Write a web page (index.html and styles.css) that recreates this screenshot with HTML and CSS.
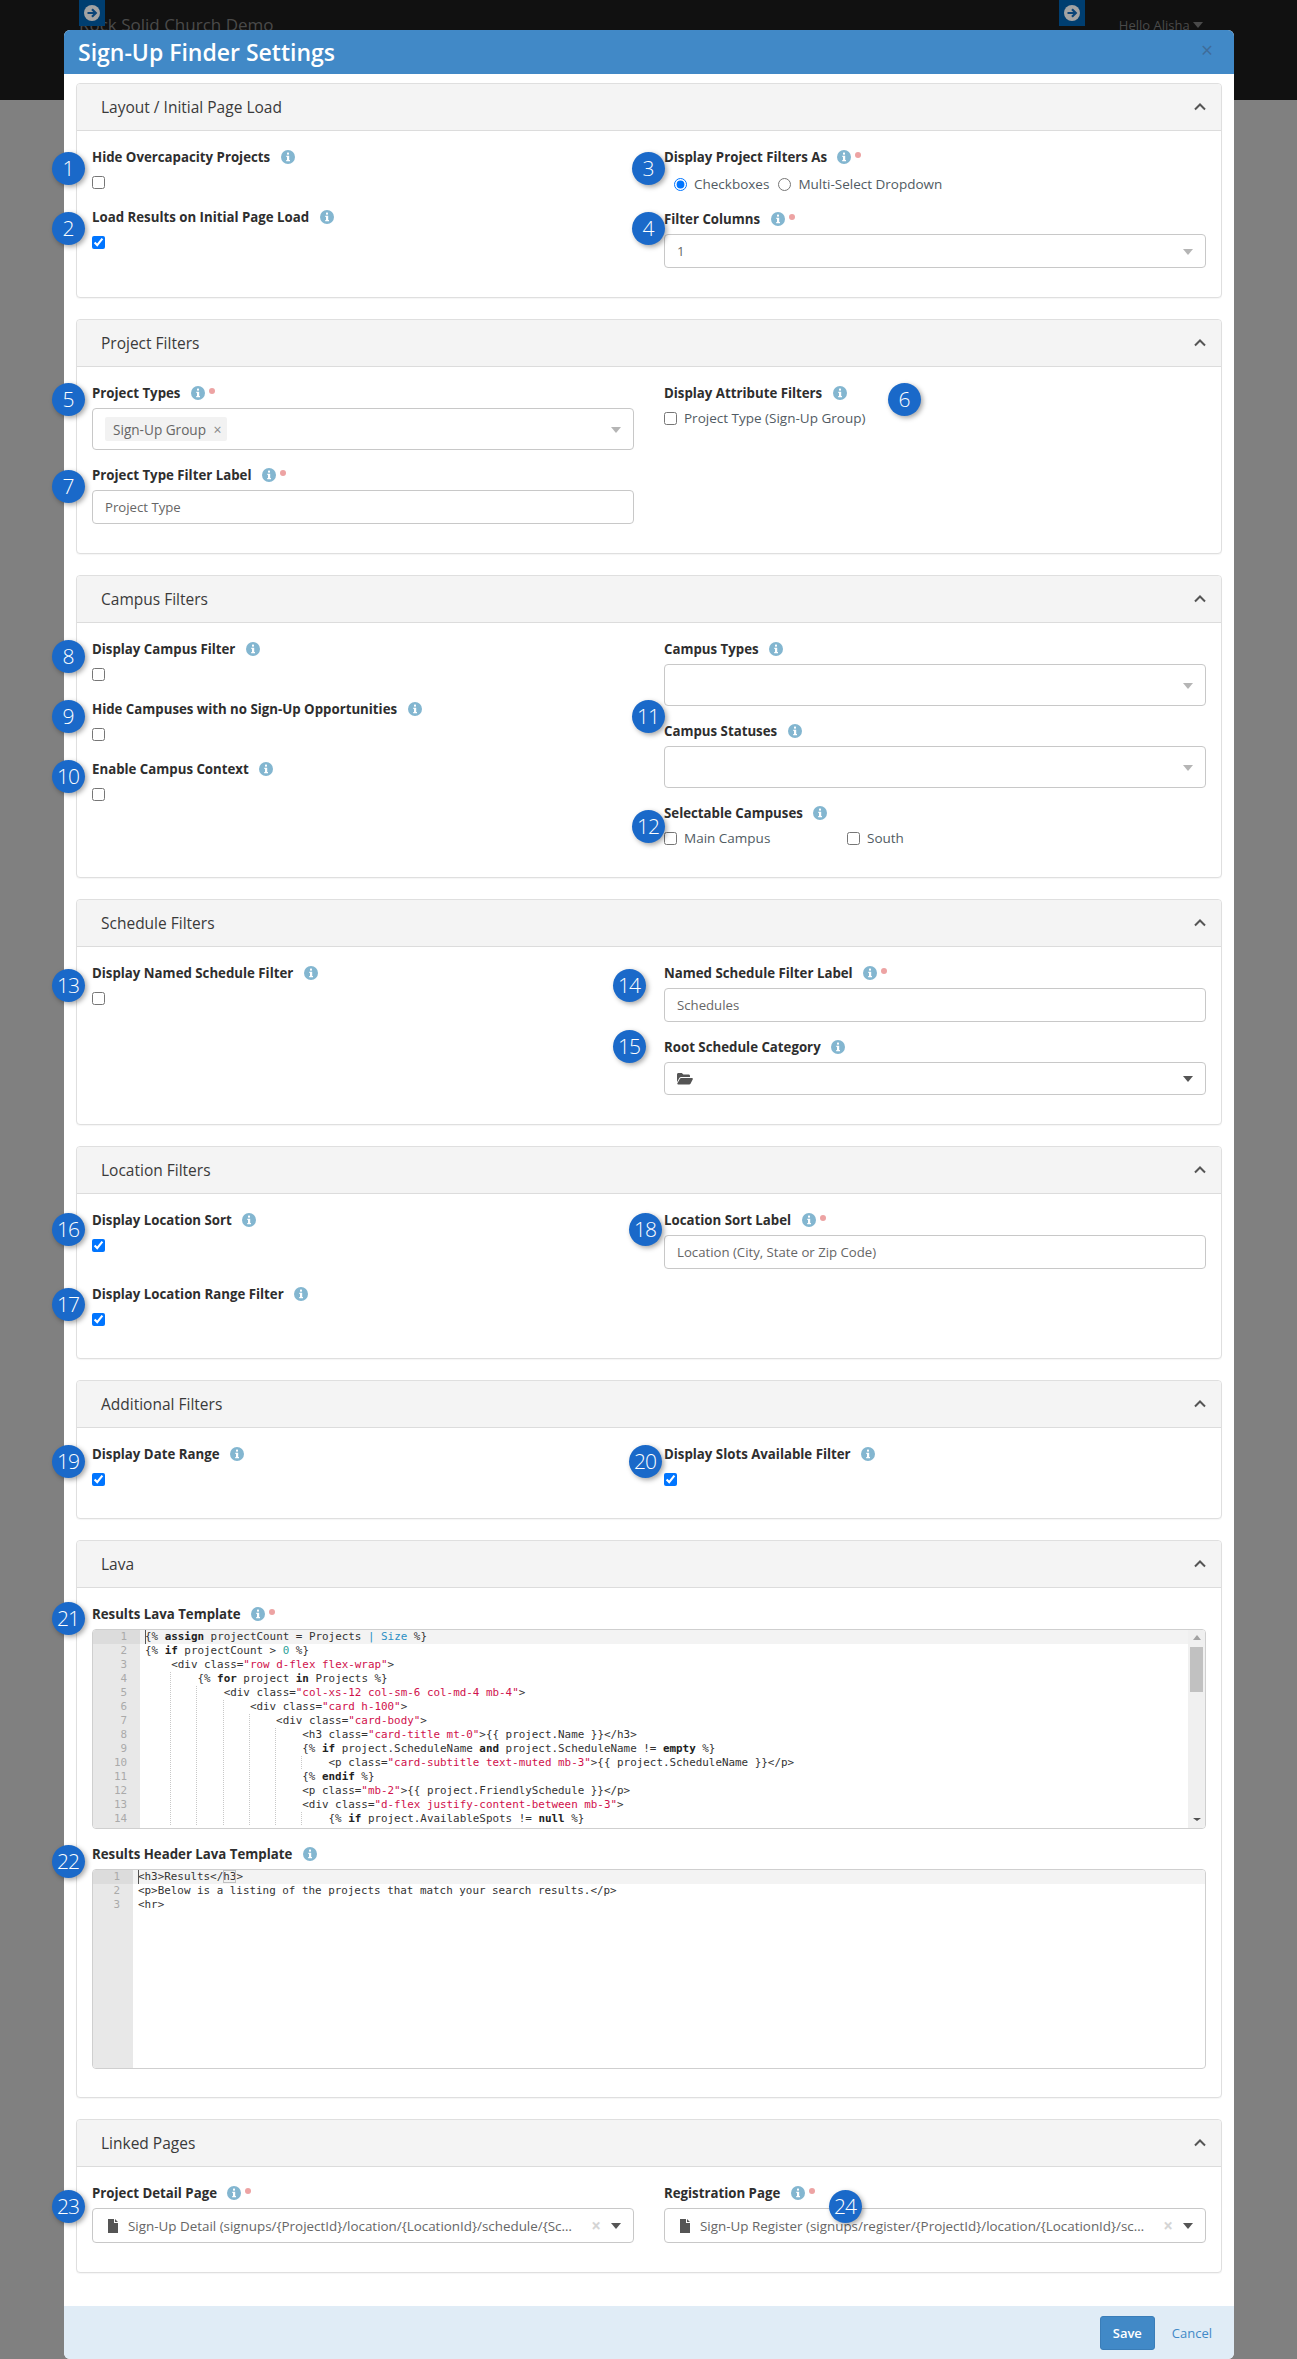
FILE: index.html
```html
<!DOCTYPE html>
<html lang="en">
<head>
<meta charset="utf-8">
<title>Sign-Up Finder Settings</title>
<link rel="stylesheet" href="styles.css">
</head>
<body>
<svg class="defs" width="0" height="0" aria-hidden="true">
  <symbol id="i-info" viewBox="0 0 14 14">
    <circle cx="7" cy="7" r="7" fill="#83b6d0"/>
    <rect x="6" y="2.6" width="2" height="2" fill="#fff"/>
    <path d="M5.3 5.8h2.9v4.2h.8v1.2H5.2V10H6V7H5.3z" fill="#fff"/>
  </symbol>
  <symbol id="i-up" viewBox="0 0 14 10">
    <path d="M2 7.5 7 2.5l5 5" fill="none" stroke="#555" stroke-width="2"/>
  </symbol>
  <symbol id="i-file" viewBox="0 0 10 14">
    <path d="M0 0h6v4h4v10H0zM7 0l3 3H7z" fill="#555"/>
  </symbol>
  <symbol id="i-folder" viewBox="0 0 16 12">
    <path d="M0 1.5C0 .7.6 0 1.4 0h3.4l1.6 1.6h5.2c.8 0 1.4.6 1.4 1.4v1H4.2c-.8 0-1.5.4-1.9 1.1L0 9.2zM4.2 5H15c.7 0 1.1.7.8 1.3l-2.3 4.5c-.3.5-.7.8-1.3.8H1.2c-.7 0-1.1-.7-.8-1.3l2.5-4.5C3.100 5.300 3.600 5 4.200 5z" fill="#555"/>
  </symbol>
  <symbol id="i-go" viewBox="0 0 16 16">
    <circle cx="8" cy="8" r="8" fill="#a3a3a3"/>
    <path d="M3.500 8h8M8 4.200 11.800 8 8 11.800" fill="none" stroke="#0b4478" stroke-width="2.200"/>
  </symbol>
</svg>

<div class="topbar">
  <span class="brand">Rock Solid Church Demo</span>
  <span class="hello">Hello Alisha <i class="hello-caret"></i></span>
  <span class="go go-left"><svg class="go-icon"><use href="#i-go"/></svg></span>
  <span class="go go-right"><svg class="go-icon"><use href="#i-go"/></svg></span>
</div>

<div class="modal">
  <div class="modal-head">
    <h2 class="modal-title">Sign-Up Finder Settings</h2>
    <span class="modal-close">×</span>
  </div>
  <div class="modal-body">

    <section class="panel">
      <header class="panel-head"><h3 class="panel-title">Layout / Initial Page Load</h3><svg class="chev"><use href="#i-up"/></svg></header>
      <div class="panel-body">
        <div class="col">
          <div class="field">
            <div class="lbl">Hide Overcapacity Projects <svg class="info"><use href="#i-info"/></svg></div>
            <div class="check-row"><input type="checkbox"></div>
          </div>
          <div class="field">
            <div class="lbl">Load Results on Initial Page Load <svg class="info"><use href="#i-info"/></svg></div>
            <div class="check-row"><input type="checkbox" checked></div>
          </div>
        </div>
        <div class="col">
          <div class="field">
            <div class="lbl">Display Project Filters As <svg class="info"><use href="#i-info"/></svg><i class="req"></i></div>
            <div class="radio-row">
              <label class="opt"><input type="radio" name="display" checked>Checkboxes</label>
              <label class="opt"><input type="radio" name="display">Multi-Select Dropdown</label>
            </div>
          </div>
          <div class="field">
            <div class="lbl">Filter Columns <svg class="info"><use href="#i-info"/></svg><i class="req"></i></div>
            <div class="select select-single"><span class="value">1</span><i class="caret"></i></div>
          </div>
        </div>
      </div>
    </section>

    <section class="panel">
      <header class="panel-head"><h3 class="panel-title">Project Filters</h3><svg class="chev"><use href="#i-up"/></svg></header>
      <div class="panel-body">
        <div class="col">
          <div class="field">
            <div class="lbl">Project Types <svg class="info"><use href="#i-info"/></svg><i class="req"></i></div>
            <div class="select select-tall"><span class="chip">Sign-Up Group <b class="chip-x">×</b></span><i class="caret"></i></div>
          </div>
          <div class="field">
            <div class="lbl">Project Type Filter Label <svg class="info"><use href="#i-info"/></svg><i class="req"></i></div>
            <div class="input">Project Type</div>
          </div>
        </div>
        <div class="col">
          <div class="field">
            <div class="lbl">Display Attribute Filters <svg class="info"><use href="#i-info"/></svg></div>
            <div class="check-row"><label class="opt"><input type="checkbox">Project Type (Sign-Up Group)</label></div>
          </div>
        </div>
      </div>
    </section>

    <section class="panel">
      <header class="panel-head"><h3 class="panel-title">Campus Filters</h3><svg class="chev"><use href="#i-up"/></svg></header>
      <div class="panel-body">
        <div class="col">
          <div class="field">
            <div class="lbl">Display Campus Filter <svg class="info"><use href="#i-info"/></svg></div>
            <div class="check-row"><input type="checkbox"></div>
          </div>
          <div class="field">
            <div class="lbl">Hide Campuses with no Sign-Up Opportunities <svg class="info"><use href="#i-info"/></svg></div>
            <div class="check-row"><input type="checkbox"></div>
          </div>
          <div class="field">
            <div class="lbl">Enable Campus Context <svg class="info"><use href="#i-info"/></svg></div>
            <div class="check-row"><input type="checkbox"></div>
          </div>
        </div>
        <div class="col">
          <div class="field">
            <div class="lbl">Campus Types <svg class="info"><use href="#i-info"/></svg></div>
            <div class="select select-tall select-end"><i class="caret"></i></div>
          </div>
          <div class="field">
            <div class="lbl">Campus Statuses <svg class="info"><use href="#i-info"/></svg></div>
            <div class="select select-tall select-end"><i class="caret"></i></div>
          </div>
          <div class="field">
            <div class="lbl">Selectable Campuses <svg class="info"><use href="#i-info"/></svg></div>
            <div class="campus-list">
              <label class="opt"><input type="checkbox">Main Campus</label>
              <label class="opt"><input type="checkbox">South</label>
            </div>
          </div>
        </div>
      </div>
    </section>

    <section class="panel">
      <header class="panel-head"><h3 class="panel-title">Schedule Filters</h3><svg class="chev"><use href="#i-up"/></svg></header>
      <div class="panel-body">
        <div class="col">
          <div class="field">
            <div class="lbl">Display Named Schedule Filter <svg class="info"><use href="#i-info"/></svg></div>
            <div class="check-row"><input type="checkbox"></div>
          </div>
        </div>
        <div class="col">
          <div class="field">
            <div class="lbl">Named Schedule Filter Label <svg class="info"><use href="#i-info"/></svg><i class="req"></i></div>
            <div class="input">Schedules</div>
          </div>
          <div class="field">
            <div class="lbl">Root Schedule Category <svg class="info"><use href="#i-info"/></svg></div>
            <div class="select select-picker"><svg class="folder"><use href="#i-folder"/></svg><i class="caret caret-dark"></i></div>
          </div>
        </div>
      </div>
    </section>

    <section class="panel">
      <header class="panel-head"><h3 class="panel-title">Location Filters</h3><svg class="chev"><use href="#i-up"/></svg></header>
      <div class="panel-body">
        <div class="col">
          <div class="field field-loose">
            <div class="lbl">Display Location Sort <svg class="info"><use href="#i-info"/></svg></div>
            <div class="check-row"><input type="checkbox" checked></div>
          </div>
          <div class="field">
            <div class="lbl">Display Location Range Filter <svg class="info"><use href="#i-info"/></svg></div>
            <div class="check-row"><input type="checkbox" checked></div>
          </div>
        </div>
        <div class="col">
          <div class="field">
            <div class="lbl">Location Sort Label <svg class="info"><use href="#i-info"/></svg><i class="req"></i></div>
            <div class="input">Location (City, State or Zip Code)</div>
          </div>
        </div>
      </div>
    </section>

    <section class="panel">
      <header class="panel-head"><h3 class="panel-title">Additional Filters</h3><svg class="chev"><use href="#i-up"/></svg></header>
      <div class="panel-body">
        <div class="col">
          <div class="field">
            <div class="lbl">Display Date Range <svg class="info"><use href="#i-info"/></svg></div>
            <div class="check-row"><input type="checkbox" checked></div>
          </div>
        </div>
        <div class="col">
          <div class="field">
            <div class="lbl">Display Slots Available Filter <svg class="info"><use href="#i-info"/></svg></div>
            <div class="check-row"><input type="checkbox" checked></div>
          </div>
        </div>
      </div>
    </section>

    <section class="panel">
      <header class="panel-head"><h3 class="panel-title">Lava</h3><svg class="chev"><use href="#i-up"/></svg></header>
      <div class="panel-body panel-body-single">
        <div class="field">
          <div class="lbl">Results Lava Template <svg class="info"><use href="#i-info"/></svg><i class="req"></i></div>
          <div class="editor">
            <div class="gutter"><span class="gl gl-active">1</span><span class="gl">2</span><span class="gl">3</span><span class="gl">4</span><span class="gl">5</span><span class="gl">6</span><span class="gl">7</span><span class="gl">8</span><span class="gl">9</span><span class="gl">10</span><span class="gl">11</span><span class="gl">12</span><span class="gl">13</span><span class="gl">14</span></div>
            <div class="code">
<span class="ln ln-active">{% <b>assign</b> projectCount = Projects <span class="b">| Size</span> %}</span>
<span class="ln">{% <b>if</b> projectCount &gt; <span class="n">0</span> %}</span>
<span class="ln"><i>    </i>&lt;div class=<span class="s">"row d-flex flex-wrap"</span>&gt;</span>
<span class="ln"><i class="g">    </i><i>    </i>{% <b>for</b> project <b>in</b> Projects %}</span>
<span class="ln"><i class="g">    </i><i class="g">    </i><i>    </i>&lt;div class=<span class="s">"col-xs-12 col-sm-6 col-md-4 mb-4"</span>&gt;</span>
<span class="ln"><i class="g">    </i><i class="g">    </i><i class="g">    </i><i>    </i>&lt;div class=<span class="s">"card h-100"</span>&gt;</span>
<span class="ln"><i class="g">    </i><i class="g">    </i><i class="g">    </i><i class="g">    </i><i>    </i>&lt;div class=<span class="s">"card-body"</span>&gt;</span>
<span class="ln"><i class="g">    </i><i class="g">    </i><i class="g">    </i><i class="g">    </i><i class="g">    </i><i>    </i>&lt;h3 class=<span class="s">"card-title mt-0"</span>&gt;{{ project.Name }}&lt;/h3&gt;</span>
<span class="ln"><i class="g">    </i><i class="g">    </i><i class="g">    </i><i class="g">    </i><i class="g">    </i><i>    </i>{% <b>if</b> project.ScheduleName <b>and</b> project.ScheduleName != <b>empty</b> %}</span>
<span class="ln"><i class="g">    </i><i class="g">    </i><i class="g">    </i><i class="g">    </i><i class="g">    </i><i class="g">    </i><i>    </i>&lt;p class=<span class="s">"card-subtitle text-muted mb-3"</span>&gt;{{ project.ScheduleName }}&lt;/p&gt;</span>
<span class="ln"><i class="g">    </i><i class="g">    </i><i class="g">    </i><i class="g">    </i><i class="g">    </i><i>    </i>{% <b>endif</b> %}</span>
<span class="ln"><i class="g">    </i><i class="g">    </i><i class="g">    </i><i class="g">    </i><i class="g">    </i><i>    </i>&lt;p class=<span class="s">"mb-2"</span>&gt;{{ project.FriendlySchedule }}&lt;/p&gt;</span>
<span class="ln"><i class="g">    </i><i class="g">    </i><i class="g">    </i><i class="g">    </i><i class="g">    </i><i>    </i>&lt;div class=<span class="s">"d-flex justify-content-between mb-3"</span>&gt;</span>
<span class="ln"><i class="g">    </i><i class="g">    </i><i class="g">    </i><i class="g">    </i><i class="g">    </i><i class="g">    </i><i>    </i>{% <b>if</b> project.AvailableSpots != <b>null</b> %}</span>
            </div>
            <div class="scrollbar"><i class="sb-up"></i><i class="sb-thumb"></i><i class="sb-down"></i></div>
          </div>
        </div>
        <div class="field">
          <div class="lbl">Results Header Lava Template <svg class="info"><use href="#i-info"/></svg></div>
          <div class="editor">
            <div class="gutter gutter-narrow"><span class="gl gl-active">1</span><span class="gl">2</span><span class="gl">3</span></div>
            <div class="code">
<span class="ln ln-active">&lt;h3&gt;Results&lt;/<span class="match">h3</span>&gt;</span>
<span class="ln">&lt;p&gt;Below is a listing of the projects that match your search results.&lt;/p&gt;</span>
<span class="ln">&lt;hr&gt;</span>
            </div>
          </div>
        </div>
      </div>
    </section>

    <section class="panel">
      <header class="panel-head"><h3 class="panel-title">Linked Pages</h3><svg class="chev"><use href="#i-up"/></svg></header>
      <div class="panel-body">
        <div class="col">
          <div class="field">
            <div class="lbl">Project Detail Page <svg class="info"><use href="#i-info"/></svg><i class="req"></i></div>
            <div class="select select-picker select-page"><svg class="file"><use href="#i-file"/></svg><span class="page-name">Sign-Up Detail (signups/{ProjectId}/location/{LocationId}/schedule/{ScheduleId})</span><b class="clear">×</b><i class="caret caret-dark"></i></div>
          </div>
        </div>
        <div class="col">
          <div class="field">
            <div class="lbl">Registration Page <svg class="info"><use href="#i-info"/></svg><i class="req"></i></div>
            <div class="select select-picker select-page"><svg class="file"><use href="#i-file"/></svg><span class="page-name">Sign-Up Register (signups/register/{ProjectId}/location/{LocationId}/schedule/{ScheduleId})</span><b class="clear">×</b><i class="caret caret-dark"></i></div>
          </div>
        </div>
      </div>
    </section>

  </div>
  <div class="modal-foot">
    <a class="btn-save">Save</a>
    <a class="btn-cancel">Cancel</a>
  </div>
</div>

<div class="pins">
  <span class="pin p1">1</span><span class="pin p2">2</span><span class="pin p3">3</span><span class="pin p4">4</span>
  <span class="pin p5">5</span><span class="pin p6">6</span><span class="pin p7">7</span><span class="pin p8">8</span>
  <span class="pin p9">9</span><span class="pin p10">10</span><span class="pin p11">11</span><span class="pin p12">12</span>
  <span class="pin p13">13</span><span class="pin p14">14</span><span class="pin p15">15</span><span class="pin p16">16</span>
  <span class="pin p17">17</span><span class="pin p18">18</span><span class="pin p19">19</span><span class="pin p20">20</span>
  <span class="pin p21">21</span><span class="pin p22">22</span><span class="pin p23">23</span><span class="pin p24">24</span>
</div>
</body>
</html>
```

FILE: styles.css
```css
* { box-sizing: border-box; }
html, body { margin: 0; padding: 0; }
body {
  position: relative;
  height: 2359px;
  overflow: hidden;
  background: #808080;
  font-family: "Open Sans", sans-serif;
  font-size: 13px;
  color: #555;
}
.defs { position: absolute; }

/* top bar behind the dialog */
.topbar {
  position: relative;
  height: 100px;
  background: #111;
  color: #4a4a4a;
  display: flex;
  justify-content: space-between;
  padding: 13px 94px 0 79px;
}
.brand { font-size: 17px; line-height: 24px; }
.hello { font-size: 13px; line-height: 24px; }
.hello-caret {
  display: inline-block;
  border: 5px solid transparent;
  border-top: 6px solid #4a4a4a;
  border-bottom: 0;
  vertical-align: 2px;
}
.go {
  position: absolute;
  top: 0;
  width: 26px;
  height: 26px;
  background: #003e70;
  display: flex;
  align-items: center;
  justify-content: center;
}
.go-left { left: 79px; }
.go-right { left: 1059px; }
.go-icon { width: 16px; height: 16px; }

/* dialog */
.modal {
  position: absolute;
  left: 64px;
  top: 30px;
  width: 1170px;
  height: 2329px;
  background: #fff;
  border-radius: 6px;
  overflow: hidden;
  display: flex;
  flex-direction: column;
}
.modal-head {
  height: 44px;
  flex: none;
  background: #4189c7;
  display: flex;
  align-items: center;
  justify-content: space-between;
  padding: 0 21px 0 14px;
}
.modal-title {
  margin: 0;
  font-size: 23px;
  font-weight: 600;
  color: #fff;
  line-height: 28px;
}
.modal-close {
  font-size: 21px;
  line-height: 1;
  color: #3f6c99;
  margin-top: -3px;
}
.modal-body {
  flex: 1;
  padding: 9px 12px 12px;
  display: flex;
  flex-direction: column;
  gap: 21px;
}
.modal-foot {
  flex: none;
  height: 53px;
  background: #e0ecf6;
  display: flex;
  align-items: center;
  justify-content: flex-end;
  gap: 17px;
  padding: 0 22px 0 0;
}
.btn-save {
  width: 55px;
  height: 34px;
  background: #4189c7;
  color: #fff;
  border-radius: 3px;
  border: 1px solid #3a7db8;
  font-size: 13px;
  font-weight: 600;
  line-height: 32px;
  text-align: center;
}
.btn-cancel { color: #4189c7; font-size: 13px; }

/* panels */
.panel {
  border: 1px solid #dfdfdf;
  border-radius: 4px;
  background: #fff;
  box-shadow: 0 1px 1px rgba(0, 0, 0, .04);
}
.panel-head {
  height: 47px;
  background: #f4f4f4;
  border-bottom: 1px solid #dcdcdc;
  border-radius: 4px 4px 0 0;
  display: flex;
  align-items: center;
  justify-content: space-between;
  padding: 0 14px 0 24px;
}
.panel-title {
  margin: 0;
  font-size: 15.5px;
  font-weight: 400;
  color: #3a3a3a;
}
.chev { width: 14px; height: 10px; }
.panel-body {
  display: grid;
  grid-template-columns: 542px 542px;
  column-gap: 30px;
  padding: 16px 15px 14px;
}
.panel-body-single { display: block; }
.panel-body-single .field:last-child { margin-bottom: 14px; }
.field { margin-bottom: 15px; }
.field-loose { margin-bottom: 29px; }
.lbl {
  display: flex;
  align-items: center;
  height: 20px;
  margin-bottom: 5px;
  font-size: 13.25px;
  font-weight: 700;
  color: #2e2e2e;
  white-space: pre;
}
.info { width: 14px; height: 14px; margin-left: 7px; flex: none; }
.req {
  width: 6px;
  height: 6px;
  border-radius: 50%;
  background: #eda3a3;
  margin: -5px 0 0 4px;
  flex: none;
}
.check-row { height: 20px; display: flex; align-items: center; }
input[type="checkbox"], input[type="radio"] {
  width: 13px;
  height: 13px;
  margin: 0;
  flex: none;
}
.radio-row {
  height: 22px;
  padding: 2px 0 0 10px;
  display: flex;
  align-items: center;
  gap: 9px;
}
.opt { display: flex; align-items: center; gap: 7px; color: #515b63; font-size: 13.5px; }
.campus-list { display: grid; grid-template-columns: 183px 183px; height: 20px; }

.select, .input {
  border: 1px solid #c8c8c8;
  border-radius: 4px;
  background: #fff;
  color: #666;
  font-size: 13.2px;
  display: flex;
  align-items: center;
}
.input { height: 34px; padding: 0 12px; }
.select { position: relative; padding-right: 12px; justify-content: space-between; }
.select-single { height: 34px; padding-left: 12px; }
.select-tall { height: 42px; padding-left: 12px; }
.select-end { justify-content: flex-end; }
.select-picker { height: 33px; padding: 0 12px; }
.select-page { height: 35px; justify-content: flex-start; font-size: 13.4px; padding-left: 15px; }
.caret {
  width: 0;
  height: 0;
  border: 5px solid transparent;
  border-top: 6px solid #b5b5b5;
  border-bottom: 0;
  margin: 2px 0 0 auto;
  flex: none;
}
.caret-dark { border-top-color: #555; margin-top: 0; }
.chip {
  height: 24px;
  padding: 0 5px 0 8px;
  background: #f2f2f2;
  border-radius: 2px;
  display: flex;
  align-items: center;
  gap: 4px;
  color: #666;
  font-size: 13.6px;
  white-space: pre;
}
.chip-x { font-weight: 400; font-size: 14px; color: #888; }
.folder { width: 16px; height: 12px; }
.file { width: 10px; height: 14px; margin-right: 10px; flex: none; }
.page-name {
  flex: 1;
  min-width: 0;
  white-space: nowrap;
  overflow: hidden;
  text-overflow: ellipsis;
}
.clear { width: 34px; text-align: right; padding-right: 6px; font-size: 17px; color: #d5d5d5; flex: none; margin-right: 4px; }

/* code editors */
.editor {
  position: relative;
  height: 200px;
  border: 1px solid #cfcfcf;
  border-radius: 4px;
  overflow: hidden;
  display: flex;
  font-family: "DejaVu Sans Mono", monospace;
  font-size: 10.9px;
  line-height: 14px;
  color: #333;
}
.gutter {
  width: 47px;
  flex: none;
  background: #e8e8e8;
  color: #aaa;
  display: flex;
  flex-direction: column;
}
.gutter-narrow { width: 40px; }
.gl { display: block; height: 14px; padding-right: 13px; text-align: right; }
.gl-active { background: #dcdcdc; }
.code {
  flex: 1;
  min-width: 0;
  display: block;
  overflow: hidden;
}
.ln { display: block; height: 14px; padding-left: 5px; white-space: pre; }
.ln-active { background: #f3f3f3; position: relative; }
.ln-active::before {
  content: "";
  position: absolute;
  left: 5px;
  top: 0;
  width: 1px;
  height: 14px;
  background: #555;
}
.match { outline: 1px solid #c0c0c0; outline-offset: -1px; }
.code i {
  font-style: normal;
  display: inline-block;
  height: 14px;
  vertical-align: top;
  width: 4ch;
}
.code i.g {
  background: repeating-linear-gradient(to bottom, #c8c8c8 0, #c8c8c8 1px, transparent 1px, transparent 2px) right top / 1px 100% no-repeat;
}
.code b { font-weight: 700; color: #222; }
.s { color: #d0104c; }
.b { color: #2b8fc4; }
.n { color: #2aa198; }
.scrollbar {
  position: absolute;
  top: 0;
  right: 0;
  bottom: 0;
  width: 17px;
  background: #f0f0f0;
}
.sb-up, .sb-down {
  position: absolute;
  left: 5px;
  width: 0;
  height: 0;
  border: 4px solid transparent;
}
.sb-up { top: 5px; border-bottom: 5px solid #a3a3a3; border-top: 0; }
.sb-down { bottom: 7px; border-top: 3px solid #505050; border-bottom: 0; }
.sb-thumb {
  position: absolute;
  left: 2px;
  top: 17px;
  width: 13px;
  height: 45px;
  background: #c1c1c1;
}

/* numbered annotation pins */
.pins { position: absolute; left: 0; top: 0; width: 100%; height: 100%; pointer-events: none; }
.pin {
  position: absolute;
  width: 33px;
  height: 33px;
  margin: -16.5px 0 0 -16.5px;
  border-radius: 50%;
  background: #1a69c9;
  color: #fff;
  font-size: 21px;
  font-weight: 300;
  line-height: 33px;
  text-align: center;
  letter-spacing: -1px;
  box-shadow: 2px 2px 5px rgba(0, 0, 0, .35);
}
.p1 { left: 68px; top: 168px; }
.p2 { left: 68px; top: 228px; }
.p3 { left: 648px; top: 168px; }
.p4 { left: 648px; top: 228px; }
.p5 { left: 68px; top: 399px; }
.p6 { left: 904px; top: 399px; }
.p7 { left: 68px; top: 486px; }
.p8 { left: 68px; top: 656px; }
.p9 { left: 68px; top: 716px; }
.p10 { left: 68px; top: 776px; }
.p11 { left: 648px; top: 716px; }
.p12 { left: 648px; top: 826px; }
.p13 { left: 68px; top: 985px; }
.p14 { left: 629px; top: 985px; }
.p15 { left: 629px; top: 1046px; }
.p16 { left: 68px; top: 1229px; }
.p17 { left: 68px; top: 1304px; }
.p18 { left: 645px; top: 1229px; }
.p19 { left: 68px; top: 1461px; }
.p20 { left: 645px; top: 1461px; }
.p21 { left: 68px; top: 1618px; }
.p22 { left: 68px; top: 1861px; }
.p23 { left: 68px; top: 2206px; }
.p24 { left: 845px; top: 2206px; }
```
